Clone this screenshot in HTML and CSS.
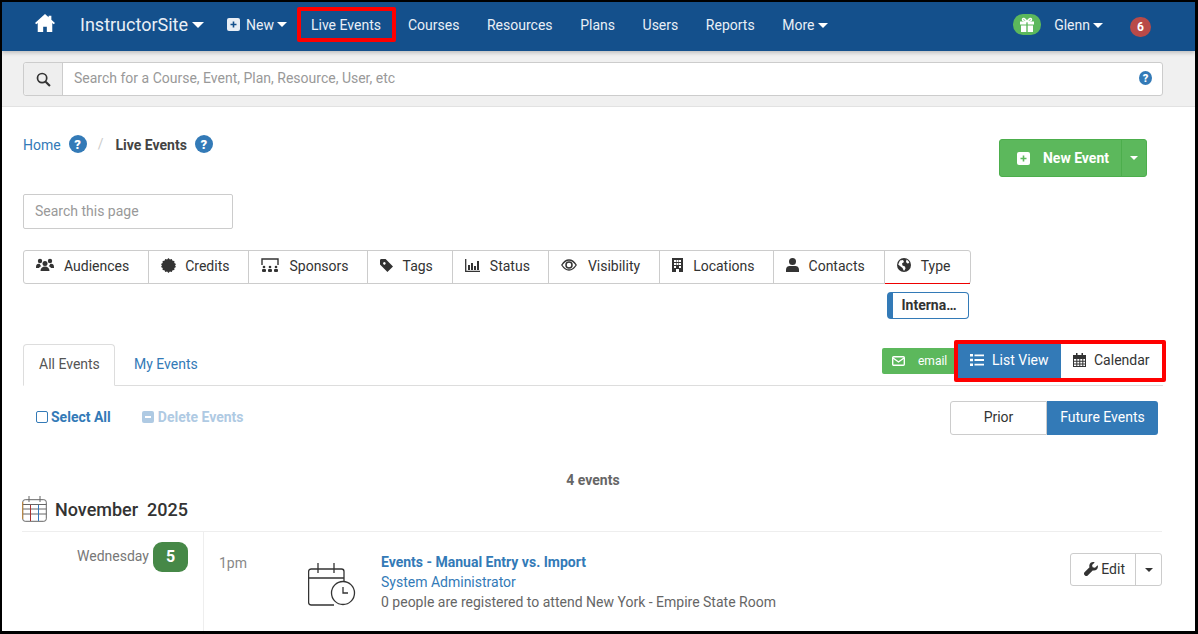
FILE: index.html
```html
<!DOCTYPE html>
<html lang="en">
<head>
<meta charset="utf-8">
<title>Live Events</title>
<link rel="stylesheet" href="styles.css">
</head>
<body>
<div class="frame">
  <header class="navbar">
    <a class="home"><svg viewBox="0 0 24 22" width="22" height="20"><path fill="#fff" d="M12 1 1 11l1.4 1.5L4 11v10h6v-6h4v6h6V11l1.6 1.5L23 11l-4-3.6V3h-3v1.7z"/></svg></a>
    <a class="brand">InstructorSite<i class="caret big"></i></a>
    <a class="item new"><svg class="plus" viewBox="0 0 13 13" width="13" height="13"><rect width="13" height="13" rx="2" fill="#e8eef5"/><path d="M6.500 3.500v6M3.500 6.500h6" stroke="#14508c" stroke-width="1.600"/></svg>New<i class="caret"></i></a>
    <a class="item live">Live Events</a>
    <a class="item courses">Courses</a>
    <a class="item">Resources</a>
    <a class="item">Plans</a>
    <a class="item">Users</a>
    <a class="item">Reports</a>
    <a class="item">More<i class="caret"></i></a>
    <span class="nav-right">
      <span class="gift"><svg viewBox="0 0 16 16" width="16" height="16"><path fill="#fff" d="M1 4.500h6.300v3H1zM8.700 4.500H15v3H8.700zM2 8.500h5.300V15H2zM8.700 8.500H14V15H8.700z"/><path fill="none" stroke="#fff" stroke-width="1.500" d="M8 4.500C6 1 3.500 .7 3.500 2.500c0 1.600 2.500 2 4.500 2s4.500-.4 4.500-2C12.500 .7 10 1 8 4.500z"/></svg></span>
      <a class="item user">Glenn<i class="caret"></i></a>
      <span class="count">6</span>
    </span>
  </header>

  <div class="searchband">
    <div class="searchbar">
      <span class="addon"><svg viewBox="0 0 14 14" width="15" height="15"><circle cx="5.700" cy="5.700" r="4.300" fill="none" stroke="#333" stroke-width="1.600"/><path d="m9 9 4 4" stroke="#333" stroke-width="2"/></svg></span>
      <span class="searchtext">Search for a Course, Event, Plan, Resource, User, etc</span>
      <span class="help small">?</span>
    </div>
  </div>

  <main class="content">
    <div class="toprow">
      <nav class="crumbs">
        <a class="link crumbtext">Home</a><span class="help">?</span>
        <span class="sep">/</span>
        <b class="crumbtext">Live Events</b><span class="help">?</span>
      </nav>
      <div class="newevent">
        <span class="ne-main"><svg viewBox="0 0 13 13" width="13" height="13"><rect width="13" height="13" rx="2" fill="#fff"/><path d="M6.500 3.500v6M3.500 6.500h6" stroke="#5cb85c" stroke-width="1.600"/></svg>New Event</span>
        <span class="ne-drop"><i class="caret"></i></span>
      </div>
    </div>

    <div class="pagesearch">Search this page</div>

    <div class="filters">
      <span class="filter"><svg viewBox="0 0 18 14" width="18" height="14"><g fill="#333"><circle cx="4" cy="3" r="2.200"/><circle cx="14" cy="3" r="2.200"/><circle cx="9" cy="5.500" r="2.500"/><path d="M0 9c0-3 2-3.500 3.800-3 .3 1 .9 1.700 1.500 2.200C4 8.500 3.500 9 3 10H0zM18 9c0-3-2-3.500-3.800-3-.3 1-.9 1.700-1.500 2.200 1.300.3 1.800.8 2.300 1.800h3zM4.500 13c0-3 2-4.500 4.500-4.500s4.500 1.500 4.500 4.500z"/></g></svg>Audiences</span>
      <span class="filter credits"><svg viewBox="0 0 16 16" width="15" height="15"><path fill="#333" d="m8 0 1.500 1.500L11.500 1l.8 1.900 2 .3-.1 2.100L16 6.500 15 8l1 1.500-1.800 1.200.1 2.100-2 .3-.8 1.900-2-.5L8 16l-1.500-1.500-2 .5-.8-1.900-2-.3.1-2.100L0 9.500 1 8 0 6.500l1.800-1.200-.1-2.100 2-.3.8-1.900 2 .5z"/></svg>Credits</span>
      <span class="filter narrow"><svg viewBox="0 0 18 14" width="18" height="14"><path fill="none" stroke="#333" stroke-width="1.400" d="M1 7V1h16v6"/><g fill="#333"><circle cx="3" cy="9" r="1.300"/><circle cx="9" cy="9" r="1.300"/><circle cx="15" cy="9" r="1.300"/><rect x="1" y="11" width="4" height="3" rx="1"/><rect x="7" y="11" width="4" height="3" rx="1"/><rect x="13" y="11" width="4" height="3" rx="1"/></g></svg>Sponsors</span>
      <span class="filter"><svg viewBox="0 0 14 14" width="13" height="13"><path fill="#333" d="M0 1.500C0 .7.700 0 1.500 0H6l8 8-6 6-8-8zM3.300 4.700a1.400 1.400 0 1 0 0-.1z"/></svg>Tags</span>
      <span class="filter narrow"><svg viewBox="0 0 15 13" width="15" height="13"><path fill="none" stroke="#333" stroke-width="1.300" d="M.7 0v12.300H15"/><path fill="#333" d="M3 6h2v5H3zM6 4h2v7H6zM9 7h2v4H9zM12 2h2v9h-2z"/></svg>Status</span>
      <span class="filter wide-gap"><svg viewBox="0 0 16 12" width="16" height="12"><path fill="none" stroke="#333" stroke-width="1.300" d="M.8 6C3 2.500 5.300 1 8 1s5 1.500 7.200 5C13 9.500 10.700 11 8 11S3 9.500.8 6z"/><circle cx="8" cy="6" r="3" fill="none" stroke="#333" stroke-width="1.500"/></svg>Visibility</span>
      <span class="filter narrow"><svg viewBox="0 0 11 14" width="11" height="14"><path fill="#333" fill-rule="evenodd" d="M0 0h11v14H7v-3H4v3H0zM2 2v2h2V2zm2.500 0v2h2V2zM7 2v2h2V2zM2 5v2h2V5zm2.500 0v2h2V5zM7 5v2h2V5zM2 8v2h2V8zm5 0v2h2V8z"/></svg>Locations</span>
      <span class="filter"><svg viewBox="0 0 13 14" width="13" height="14"><circle cx="6.500" cy="3.500" r="3.500" fill="#333"/><path fill="#333" d="M0 14v-2.500C0 9 2 8 3.500 8h6C11 8 13 9 13 11.500V14z"/></svg>Contacts</span>
      <span class="filter type"><svg viewBox="0 0 14 14" width="14" height="14"><circle cx="7" cy="7" r="7" fill="#333"/><path fill="#fff" d="M3 2.500 6 2l1 2-2 1.500.5 2L8 8.500l.5 2L7 13 5.500 10 3 8 1.200 6.500zM9.500 1.500l2 1.500.8 2-2 .5L9 4z"/></svg>Type</span>
    </div>
    <div class="pillrow"><span class="pill">Interna…</span></div>

    <div class="tabsrow">
      <span class="tab active">All Events</span>
      <span class="tab link">My Events</span>
      <span class="tabs-right">
        <span class="email"><svg viewBox="0 0 13 10" width="13" height="10"><rect x=".7" y=".7" width="11.600" height="8.600" rx="1" fill="none" stroke="#fff" stroke-width="1.400"/><path d="m1 2 5.500 4L12 2" fill="none" stroke="#fff" stroke-width="1.400"/></svg>email</span>
        <span class="viewswitch">
          <span class="vs on"><svg viewBox="0 0 14 12" width="14" height="12"><path fill="#fff" d="M0 0h3v2.600H0zM0 4.700h3v2.600H0zM0 9.400h3V12H0zM4.500.4H14v1.800H4.500zM4.500 5.100H14v1.800H4.500zM4.500 9.800H14v1.800H4.500z"/></svg>List View</span>
          <span class="vs"><svg viewBox="0 0 13 14" width="13" height="14"><path fill="#333" fill-rule="evenodd" d="M3 0h1.500v2h4V0H10v2h3v12H0V2h3zM1 6v1.800h2.300V6zm3.300 0v1.800h2V6zm3 0v1.800h2V6zm3 0v1.800H12V6zM1 8.800v1.800h2.300V8.800zm3.300 0v1.800h2V8.800zm3 0v1.800h2V8.800zm3 0v1.800H12V8.800zM1 11.600v1.400h2.300v-1.400zm3.300 0v1.400h2v-1.400zm3 0v1.400h2v-1.400zm3 0v1.400H12v-1.400z"/></svg>Calendar</span>
        </span>
      </span>
    </div>

    <div class="actionrow">
      <a class="act link"><span class="check"></span>Select All</a>
      <a class="act muted"><svg viewBox="0 0 12 12" width="12" height="12"><rect width="12" height="12" rx="2" fill="#afcae3"/><path d="M3 6h6" stroke="#fff" stroke-width="2"/></svg>Delete Events</a>
      <span class="priorfuture"><span class="pf">Prior</span><span class="pf on">Future Events</span></span>
    </div>

    <div class="eventcount">4 events</div>

    <h2 class="month"><svg viewBox="0 0 25 26" width="25" height="26"><rect x=".7" y="3.700" width="23.600" height="21.600" rx="2.500" fill="none" stroke="#666" stroke-width="1"/><path d="M.7 8.500h23.600M.7 13h23.600M.7 18h23.600" stroke="#666" stroke-width="1"/><path d="M.7 6v17" stroke="#c58a3c" stroke-width="1"/><path d="M8.500 9v16" stroke="#a33" stroke-width="1"/><path d="M16.500 9v16" stroke="#37b" stroke-width="1"/><path d="M7 0v6M18 0v6" stroke="#666" stroke-width="1"/></svg>November&nbsp; 2025</h2>

    <div class="eventrow">
      <div class="daycol"><span class="dayname">Wednesday</span><span class="daynum">5</span></div>
      <div class="timecol">1pm</div>
      <div class="evicon"><svg viewBox="0 0 48 43" width="48" height="43"><g fill="none" stroke="#333" stroke-width="1.300"><path d="M26 42H3a2.500 2.500 0 0 1-2.400-2.500V8.500A2.500 2.500 0 0 1 3 6h30.500A2.500 2.500 0 0 1 36 8.500V18"/><path d="M.6 15h35.400M10 0v10M26 0v10"/><circle cx="35" cy="30" r="11.500"/><path d="M35 24v6h5"/></g></svg></div>
      <div class="evtext">
        <a class="evtitle">Events - Manual Entry vs. Import</a>
        <a class="link">System Administrator</a>
        <span class="evsub">0 people are registered to attend New York - Empire State Room</span>
      </div>
      <div class="editgroup">
        <span class="edit"><svg viewBox="0 0 14 14" width="14" height="14"><path fill="#333" d="M13.600 3.200 11 5.700 8.600 5.200 8.100 2.900 10.700.4C8.500-.5 5.900.5 5.400 3c-.2.800-.1 1.500.1 2.200L.5 10.300c-.7.700-.7 1.900 0 2.600l.5.500c.8.800 2 .8 2.700 0l5-5c2.800.8 5.600-1.300 5.200-4.500z"/></svg>Edit</span>
        <span class="editdrop"><i class="caret dark"></i></span>
      </div>
    </div>
  </main>
</div>
</body>
</html>
```

FILE: styles.css
```css
* { box-sizing: border-box; }
html, body { margin: 0; padding: 0; background: #fff; }
body { font-family: Roboto, "Liberation Sans", sans-serif; font-size: 14px; color: #333; }
.frame { width: 1198px; height: 634px; border: 2px solid #000; border-right-width: 3px; border-bottom-width: 3px; overflow: hidden; background: #fff; }

.navbar { display: flex; align-items: center; height: 49px; background: #14508c; color: #e9eff6; padding: 0 0 4px 32px; box-shadow: 0 2px 4px rgba(0,0,0,.2); position: relative; }
.home { display: flex; width: 46px; margin-bottom: 3px; }
.brand { font-size: 18px; margin-right: 23px; white-space: nowrap; }
.item { white-space: nowrap; margin-right: 27.6px; }
.new { display: flex; align-items: center; margin-right: 10px; }
.plus { margin-right: 6px; }
.live { border: 4px solid #f00; border-radius: 2px; padding: 0 11px 0 10px; height: 35px; line-height: 29px; margin-right: 12px; }
.caret { display: inline-block; width: 0; height: 0; border-left: 5px solid transparent; border-right: 5px solid transparent; border-top: 5px solid #fff; margin-left: 3px; vertical-align: 2px; }
.caret.big { border-left-width: 6px; border-right-width: 6px; border-top-width: 6px; margin-left: 4px; vertical-align: 3px; }
.caret.dark { border-left-width: 4px; border-right-width: 4px; border-top: 4px solid #333; margin: 0; vertical-align: 2px; }
.nav-right { display: flex; align-items: center; margin-left: auto; padding-right: 44px; }
.gift { display: flex; align-items: center; justify-content: center; width: 28px; height: 21px; border-radius: 10px; background: #5cb85c; margin-right: 13px; }
.user { margin-right: 27px; }
.count { width: 21px; height: 20px; border-radius: 10px; background: #b94a48; color: #fff; font-size: 12px; font-weight: 700; text-align: center; line-height: 20px; margin-top: 4px; }

.searchband { height: 56px; background: #f0f0f0; border-bottom: 1px solid #e2e2e2; padding: 11px 32px 0 21px; }
.searchbar { display: flex; align-items: center; height: 34px; background: #fff; border: 1px solid #ccc; border-radius: 3px; }
.addon { display: flex; align-items: center; justify-content: center; width: 39px; height: 32px; background: #eee; border-right: 1px solid #ccc; border-radius: 3px 0 0 3px; }
.searchtext { flex: 1; padding: 0 0 2px 11px; color: #999; }
.help { display: inline-flex; align-items: center; justify-content: center; width: 18px; height: 18px; border-radius: 50%; background: #337ab7; color: #fff; font-size: 13px; font-weight: 900; margin-left: 8px; }
.help.small { width: 13px; height: 14px; font-size: 11px; margin: 0 10px 2px 0; }

.content { padding: 0 32px 0 21px; }
.link { color: #337ab7; }
.toprow { display: flex; justify-content: space-between; align-items: flex-start; padding: 27px 16px 0 0; height: 87px; }
.crumbs { display: flex; align-items: center; height: 20px; }
.crumbtext { padding-top: 2px; }
.crumbs b { color: #444; font-weight: 700; }
.sep { color: #ccc; margin: 0 12px 0 11px; }
.newevent { display: flex; height: 38px; margin-top: 5px; background: #5cb85c; border: 1px solid #4cae4c; border-radius: 3px; color: #fff; font-weight: 700; }
.ne-main { display: flex; align-items: center; gap: 13px; padding: 0 12px 0 17px; border-right: 1px solid #4cae4c; }
.ne-drop { display: flex; align-items: center; justify-content: center; width: 24px; }
.ne-drop .caret { margin: 0; border-left-width: 4px; border-right-width: 4px; border-top-width: 4px; }
.pagesearch { width: 210px; height: 35px; border: 1px solid #ccc; border-radius: 2px; padding-left: 11px; line-height: 33px; color: #999; }

.filters { display: inline-flex; margin-top: 21px; height: 34px; border: 1px solid #ccc; border-radius: 3px; vertical-align: top; }
.filter { display: flex; align-items: center; gap: 10px; padding: 0 19px 2px 12px; border-right: 1px solid #ccc; white-space: nowrap; }
.filter svg { margin-bottom: 2px; }
.narrow { padding-right: 18px; }
.credits { gap: 9px; }
.wide-gap { gap: 11px; }
.type { border-right: 0; padding-right: 20px; position: relative; }
.type::after { content: ""; position: absolute; left: 0; right: 0; bottom: -1px; height: 1px; background: #e00; }
.pillrow { display: flex; margin-top: 8px; height: 27px; padding-left: 864px; }
.pill { width: 82px; height: 27px; border: 1px solid #337ab7; border-left-width: 6px; border-radius: 4px; font-weight: 700; line-height: 25px; text-align: center; padding-right: 3px; color: #333; }

.tabsrow { display: flex; align-items: flex-end; height: 42px; margin-top: 25px; border-bottom: 1px solid #ddd; }
.tab { height: 42px; padding: 0 15px; line-height: 42px; margin-right: 4px; white-space: nowrap; }
.tab.active { background: #fff; border: 1px solid #ddd; border-bottom: 1px solid #fff; border-radius: 4px 4px 0 0; margin-bottom: -1px; color: #555; line-height: 38px; width: 92px; padding: 0 0 0 15px; }
.tabs-right { display: flex; align-items: flex-start; margin-left: auto; margin-right: -3px; align-self: flex-start; margin-top: -4px; }
.email { display: flex; align-items: center; gap: 13px; width: 72px; height: 26px; margin-top: 8px; padding: 0 0 0 10px; background: #5cb85c; color: #fff; border-radius: 2px 0 0 2px; font-size: 12px; white-space: nowrap; }
.viewswitch { display: flex; width: 212px; height: 42px; border: 4px solid #f00; border-radius: 2px; }
.vs { display: flex; align-items: center; gap: 8px; width: 101px; padding: 0 0 2px 12px; white-space: nowrap; }
.vs.on { background: #337ab7; color: #fff; width: 103px; }

.actionrow { display: flex; align-items: center; height: 34px; margin-top: 15px; padding: 0 5px 0 13px; }
.act { display: flex; align-items: center; font-weight: 700; margin: 0 31px 2px 0; }
.act svg { margin-right: 4px; }
.muted { color: #afcae3; }
.check { width: 12px; height: 12px; border: 1.500px solid #337ab7; border-radius: 2px; margin-right: 3px; }
.priorfuture { display: flex; margin-left: auto; height: 34px; }
.pf { display: flex; align-items: center; justify-content: center; width: 97px; padding-bottom: 2px; border: 1px solid #ccc; border-radius: 3px 0 0 3px; }
.pf.on { width: 111px; background: #337ab7; color: #fff; border: 0; border-radius: 0 3px 3px 0; }

.eventcount { margin-top: 37px; text-align: center; font-weight: 700; color: #666; height: 16px; line-height: 16px; width: 1140px; }
.month { display: flex; align-items: center; gap: 8px; margin: 9px 0 0 -1px; height: 35px; padding-bottom: 10px; font-size: 18px; font-weight: 500; color: #333; border-bottom: 1px solid #eee; width: 1140px; }

.eventrow { display: flex; height: 101px; width: 1140px; }
.daycol { display: flex; justify-content: flex-end; gap: 4px; width: 181px; padding: 10px 15px 0 0; border-right: 1px solid #eee; }
.dayname { color: #777; line-height: 30px; margin-top: -1px; }
.daynum { width: 35px; height: 30px; background: #468847; color: #fff; border-radius: 9px; font-size: 16px; font-weight: 700; text-align: center; line-height: 30px; }
.timecol { width: 87px; padding: 23px 0 0 15px; color: #888; }
.evicon { width: 90px; padding: 31px 0 0 17px; }
.evtext { display: flex; flex-direction: column; padding-top: 20px; line-height: 20px; flex: 1; }
.evtitle { color: #337ab7; font-weight: 700; }
.evsub { color: #666; }
.editgroup { display: flex; height: 33px; margin: 21px 1px 0 0; border: 1px solid #ccc; border-radius: 3px; }
.edit { display: flex; align-items: center; gap: 3px; padding: 0 10px 2px 13px; border-right: 1px solid #ccc; }
.editdrop { display: flex; align-items: center; justify-content: center; width: 25px; }
```
